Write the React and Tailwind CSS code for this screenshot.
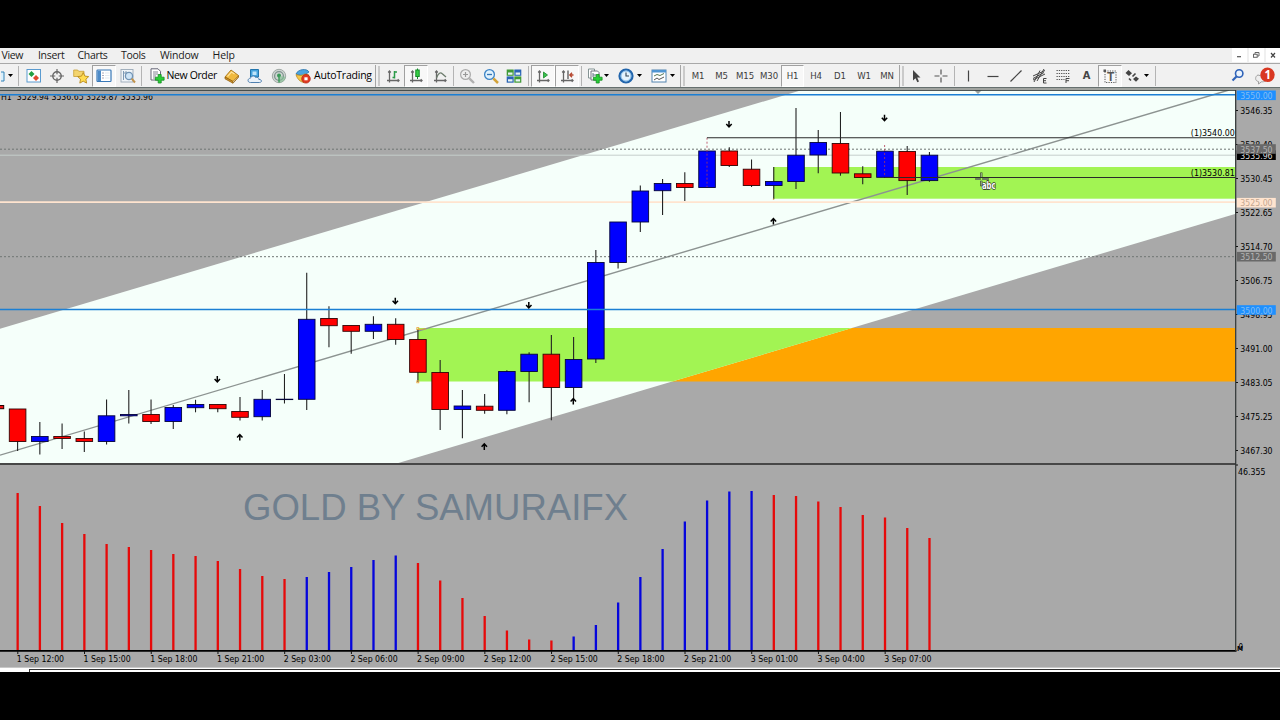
import React from "react";

const RED = "#ff0000";
const BLUE = "#0000ff";
const STEP = 22.24;
const cx = (i) => 17.8 + STEP * i;

// [color, body top, body bottom, wick top, wick bottom]
const candles = [
  ["r", 409, 441.5, 409, 451], ["b", 436.5, 441.5, 422, 454.5], ["r", 436.5, 438.5, 423.5, 449],
  ["r", 438.5, 441.5, 431.5, 452], ["b", 415.8, 441.5, 399.5, 444.5], ["b", 414.5, 415.8, 390, 423.5],
  ["r", 414.5, 421.5, 399.5, 424], ["b", 407.5, 421.5, 405, 429], ["b", 404.5, 407.7, 399.8, 412.3],
  ["r", 404.5, 408.7, 404.5, 412.3], ["r", 411.5, 417.3, 397, 420.5], ["b", 399.3, 416.7, 390, 420.5],
  ["b", 399.2, 399.6, 374, 403.5], ["b", 319.3, 399.3, 272.7, 410], ["r", 318.5, 325.7, 306.3, 347.3],
  ["r", 325.5, 331.3, 325.5, 353.7], ["b", 324.3, 331.3, 316.3, 339], ["r", 324.3, 339.5, 318.3, 344.7],
  ["r", 339.5, 372.3, 329, 382], ["r", 372.5, 409.5, 360, 430], ["b", 406, 409.5, 390, 438.3],
  ["r", 406.2, 410.3, 394, 413.7], ["b", 371.5, 410.3, 370.3, 414.3], ["b", 354.2, 371.5, 352.3, 402.3],
  ["r", 354.2, 387.5, 335, 420.3], ["b", 359.5, 387.5, 337, 400], ["b", 262.5, 359, 250, 363],
  ["b", 222, 262.5, 222, 268.5], ["b", 191, 222, 185.5, 232], ["b", 183.5, 190.7, 179, 215],
  ["r", 183.5, 187.5, 172.3, 201], ["b", 151, 187.5, 151, 187.5], ["r", 151, 165.5, 147.3, 167],
  ["r", 169.2, 185.5, 159.5, 187], ["b", 181.5, 185.5, 167, 199.3], ["b", 155.2, 181.5, 108, 189],
  ["b", 142.5, 155, 130, 173.3], ["r", 143.5, 173, 112, 175.7], ["r", 173.8, 177.5, 166.3, 184.3],
  ["b", 151.2, 177.3, 151, 178], ["r", 151.5, 180.6, 146, 195], ["b", 155.2, 180.6, 152, 181.7],
];

const bars = [
  493, 506, 523, 534, 544, 547, 550, 554, 556, 561, 569, 576, 579, 577, 572, 567, 560, 555.5,
  563, 580.5, 598, 616, 630.5, 639.5, 640.5, 636.5, 625, 602.5, 577, 549, 521.5, 500.5, 491.5, 491,
  495, 496, 501.5, 507, 515, 517.5, 528, 538,
];
const barBlue = (i) => (i >= 13 && i <= 17) || (i >= 25 && i <= 33);

const times = [
  "1 Sep 12:00", "1 Sep 15:00", "1 Sep 18:00", "1 Sep 21:00", "2 Sep 03:00", "2 Sep 06:00", "2 Sep 09:00",
  "2 Sep 12:00", "2 Sep 15:00", "2 Sep 18:00", "2 Sep 21:00", "3 Sep 01:00", "3 Sep 04:00", "3 Sep 07:00",
];

const prices = [
  ["3546.35", 110.5], ["3538.40", 144.5], ["3530.45", 178.5], ["3522.65", 212.5], ["3514.70", 246.5],
  ["3506.75", 280.5], ["3498.95", 314.5], ["3491.00", 348.5], ["3483.05", 382.5], ["3475.25", 416.5], ["3467.30", 450.5],
];

const downs = [[217.3, 379.3], [395.3, 301], [528.8, 305.3], [729, 124.3], [884.5, 118]];
const ups = [[239.8, 437.3], [484.3, 446.6], [573.3, 401.3], [773.4, 221.3]];

const FONT = "font-['DejaVu_Sans_Condensed','DejaVu_Sans',sans-serif]";

function Price({ text, y, fill = "#000" }) {
  return <text x="1240.3" y={y + 3.4} fontSize="9.5" textLength="32.3" lengthAdjust="spacingAndGlyphs" fill={fill}>{text}</text>;
}

function Tag({ text, y, bg, fill }) {
  return (
    <g>
      <rect x="1236.8" y={y - 4.8} width="39" height="9.6" fill={bg} />
      <Price text={text} y={y + 0.3} fill={fill} />
    </g>
  );
}

function Chart() {
  return (
    <svg className={`block h-[577px] w-[1280px] shrink-0 ${FONT}`} viewBox="0 90 1280 577">
      <defs>
        <clipPath id="plot"><rect x="0" y="90" width="1235" height="373.5" /></clipPath>
        <clipPath id="quote"><rect x="0" y="95.6" width="300" height="10" /></clipPath>
      </defs>
      <rect x="0" y="90" width="1280" height="577" fill="#a9a9a9" />
      <g clipPath="url(#plot)">
        <rect x="671" y="328" width="565" height="53.5" fill="#ffa500" />
        <polygon points="0,328.7 802,90 1236,90 1236,213.6 395,464 0,464" fill="#f5fffa" />
        <polygon points="417.7,328 852,328 672.3,381.5 417.7,381.5" fill="#a2f453" />
        <rect x="773.4" y="167" width="462" height="31.7" fill="#a2f453" />
        <path d="M0 455.2 1229 90" stroke="#8c9391" strokeWidth="1.4" fill="none" />
        <path d="M0 202.2H1236" stroke="#ffe4cf" strokeWidth="1.7" />
        <path d="M0 155.2H1236" stroke="#c6cecb" strokeWidth="1" />
        <path d="M0 149.2H1236M0 256.7H1236" stroke="#6f7573" strokeWidth="1" strokeDasharray="2 2" />
        <path d="M974 90h8l-4 4z" fill="#98a09d" />
      </g>
      <text x="1" y="100.300" fontSize="9.500" textLength="152" lengthAdjust="spacingAndGlyphs" clipPath="url(#quote)" xmlSpace="preserve">H1&#160; 3529.94 3536.65 3529.87 3535.96</text>

      <g>
        <rect x="-8" y="405.5" width="11.7" height="3.2" fill="#e11" stroke="#200" />
        {candles.map(([c, t, b, wt, wb], i) => (
          <g key={i}>
            <path d={`M${cx(i) - 0.9} ${wt}V${wb}`} transform="translate(.7 0)" stroke="#222" strokeWidth="1.1" />
            <rect x={cx(i) - 8.500} y={t} width="16.6" height={b - t} fill={c === "r" ? RED : BLUE} stroke={c === "r" ? "#300505" : "#05053a"} strokeWidth="0.9" />
          </g>
        ))}
      </g>
      <path d="M707 137.7V187M884.6 145V177" stroke="#b03a50" strokeWidth="0.8" strokeDasharray="2 2" />
      <path d="M707 137.700H1235M885 177.5H1235" stroke="#2a2a2a" strokeWidth="1.1" />
      <path d="M0 309.4H1236M0 94.7H1236" stroke="#1b7fd4" strokeWidth="1.5" />
      <g fill="none" stroke="#e9a23b" strokeWidth="0.8">
        <rect x="416.8" y="327.6" width="2" height="2" />
        <rect x="416.8" y="380.8" width="2" height="2" />
        <path d="M419 329.5l7-.7M773.4 198.5v1.5" />
      </g>

      <g stroke="#000" strokeWidth="1.5" fill="none">
        {downs.map(([x, y]) => <path key={x} d={`M${x} ${y - 3.3}v6M${x - 2.7} ${y - 0.2}l2.7 2.9 2.7-2.9`} />)}
        {ups.map(([x, y]) => <path key={x} d={`M${x} ${y + 3.3}v-6M${x - 2.7} ${y + 0.2}l2.7-2.9 2.7 2.9`} />)}
      </g>

      <text x="1190.800" y="136.200" fontSize="9.500" textLength="44" lengthAdjust="spacingAndGlyphs">(1)3540.00</text>
      <text x="1190.800" y="175.700" fontSize="9.500" textLength="44" lengthAdjust="spacingAndGlyphs">(1)3530.81</text>

      <g fill="none">
        <path d="M981.3 172.500v5M981.3 180.700v5.500M975.500 179h5M982.500 179h6" stroke="#303a28" strokeWidth="2.200" />
        <path d="M981.3 173v4M981.3 181.200v4.500M976 179h4M983 179h5" stroke="#d9ffc0" strokeWidth="0.700" />
      </g>
      <text x="982" y="189.3" fontSize="10" fontWeight="bold" fill="#fff" stroke="#222" strokeWidth="1.300" paintOrder="stroke" textLength="13.500" lengthAdjust="spacingAndGlyphs">abc</text>

      <path d="M0 464H1236" stroke="#474747" strokeWidth="2" />
      <path d="M0 90.4H1236" stroke="#3c4443" strokeWidth="1" />
      <text x="243" y="520.3" fontSize="37.6" fill="#6f7f8e" textLength="385" lengthAdjust="spacingAndGlyphs" className="font-['Liberation_Sans',Arial,sans-serif]">GOLD BY SAMURAIFX</text>
      {bars.map((y, i) => (
        <rect key={i} x={cx(i) - 1.3} y={y} width="2.3" height={650 - y} fill={barBlue(i) ? "#0606dc" : "#e60a0a"} />
      ))}
      <path d="M0 650.8H1236.5" stroke="#000" strokeWidth="1.8" />
      <path d="M1235.7 90V651" stroke="#2f3535" strokeWidth="1.2" />
      {times.map((t, k) => (
        <g key={t}>
          <path d={`M${cx(k * 3)} 651v3`} stroke="#111" strokeWidth="1" />
          <text x={cx(k * 3) - 1} y="662.4" fontSize="9.5" textLength="47.3" lengthAdjust="spacingAndGlyphs">{t}</text>
        </g>
      ))}
      {prices.map(([t, y]) => (
        <g key={t}>
          <path d={`M1236 ${y}h2`} stroke="#111" strokeWidth="1" />
          <Price text={t} y={y} />
        </g>
      ))}
      <Tag text="3550.00" y={95.3} bg="#1e90ff" fill="#85bdf2" />
      <Tag text="3535.96" y={155.2} bg="#000" fill="#d8d8d8" />
      <Tag text="3537.50" y={149} bg="#696969" fill="#b4b4b4" />
      <Tag text="3525.00" y={202.7} bg="#ffe4cf" fill="#c4a78f" />
      <Tag text="3512.50" y={256.7} bg="#696969" fill="#b4b4b4" />
      <Tag text="3500.00" y={310} bg="#1e90ff" fill="#85bdf2" />
      <text x="1238" y="474.6" fontSize="9.5" textLength="27.5" lengthAdjust="spacingAndGlyphs">46.355</text>
      <path d="M1236 465h2" stroke="#111" />
      <text x="1237" y="650.8" fontSize="7" fontWeight="bold" textLength="6" lengthAdjust="spacingAndGlyphs">M</text>
      <text x="1238.5" y="649.5" fontSize="8">0</text>
    </svg>
  );
}

function Ic({ children }) {
  return <svg className="h-4 w-4 shrink-0" viewBox="0 0 16 16" fill="none">{children}</svg>;
}

function Cell({ w, on, children, className = "" }) {
  return (
    <div className={`flex h-[22px] shrink-0 items-center justify-center ${w} ${className} ${on ? "border-l border-t border-[#a0a0a0] border-r border-b border-r-white border-b-white bg-[#f8f8f8]" : ""}`}>
      {children}
    </div>
  );
}

const Sep = ({ w }) => (
  <div className={`flex h-5 shrink-0 justify-center ${w}`}><div className="w-px bg-[#b4b4b4]" /></div>
);
const Handle = ({ w }) => (
  <div className={`flex h-[22px] shrink-0 items-center justify-center gap-[2px] ${w}`}>
    <div className="h-[22px] w-px bg-[#a5a5a5]" />
    <div className="h-5 w-[2px] bg-[#cacaca]" />
  </div>
);
const Caret = () => (
  <svg className="h-[3px] w-[5px] shrink-0" viewBox="0 0 5 3"><path d="M0 0h5L2.5 3z" fill="#000" /></svg>
);
const Axes = () => <path d="M4.500 3v11.500M2 12.500h12M3.200 4.500 4.500 3l1.300 1.500M12.700 11.200 14 12.500l-1.300 1.300" stroke="#666" strokeWidth="1.300" />;

function Toolbar() {
  const tf = "text-[9.5px] tracking-[-0.1px] text-[#3c3c3c] pt-px font-['DejaVu_Sans_Condensed','DejaVu_Sans',sans-serif]";
  const label = "whitespace-nowrap text-[10.5px] leading-none text-black";
  return (
    <div className="flex h-[24px] shrink-0 items-center border-t border-[#a8a8a8] bg-[#f1f1f1] font-['Open_Sans','Noto_Sans',sans-serif]">
      <Cell w="w-[14px]" className="gap-[3px]">
        <svg className="h-3 w-1" viewBox="0 0 4 12"><path d="M0 2h3v9H0" stroke="#3484b8" fill="#d9effb" /></svg>
        <Caret />
      </Cell>
      <Sep w="w-[8px]" />
      <Cell w="w-[23px]">
        <Ic><rect x="1" y="1.5" width="13.5" height="12.5" fill="#fff" stroke="#5a9bd0" /><path d="M5.500 3l3 3-3 3-3-3z" fill="#24a044" /><path d="M10 7l3 3-3 3-3-3z" fill="#e2492f" /></Ic>
      </Cell>
      <Cell w="w-[24px]">
        <Ic><circle cx="8" cy="8" r="4.2" stroke="#666" strokeWidth="1.4" /><path d="M8 1v5.3M8 9.7V15M1 8h5.3M9.7 8H15" stroke="#666" strokeWidth="1.2" /></Ic>
      </Cell>
      <Cell w="w-[23px]">
        <Ic><path d="M.7 2h4l1 1.3H11V8.5H.7z" fill="#f3d46e" stroke="#c89f35" strokeWidth=".8" /><path d="M10.2 4.6l1.7 3.5 3.8.5-2.8 2.6.7 3.9-3.4-1.9-3.4 1.9.7-3.9L4.7 8.6l3.8-.5z" fill="#ffdc50" stroke="#b98a1d" strokeWidth=".9" /></Ic>
      </Cell>
      <Cell w="w-[24px]" on>
        <Ic><rect x="1" y="2" width="14" height="11.5" rx=".8" fill="#fff" stroke="#3979b8" strokeWidth="1.2" /><path d="M1.500 2.500H5V13H1.500z" fill="#4d8bc8" /><path d="M6.500 5h1M6.500 7.500h1M6.500 10h1" stroke="#557" /><path d="M9 5h4.500M9 7.500h4.500M9 10h4.500" stroke="#d5dfea" strokeWidth=".7" /></Ic>
      </Cell>
      <Cell w="w-[24px]">
        <Ic><rect x="1" y="1.500" width="12" height="12.500" fill="#f0f4f8" stroke="#9aa9b8" strokeWidth=".9" /><path d="M3.500 3v9M3 5h8M6 3v5" stroke="#7f9ab5" strokeWidth="1" /><circle cx="9" cy="8" r="3.600" fill="#cfe5f7" stroke="#7294b5" strokeWidth="1.300" /><path d="M11.700 10.700 15 14.500" stroke="#c2934b" strokeWidth="2" /></Ic>
      </Cell>
      <Sep w="w-[3px]" />
      <Cell w="w-[77px]" className="gap-[2px] pl-[3px]">
        <Ic><path d="M2 .8h7l2.500 2.500V12H2z" fill="#fff" stroke="#667" strokeWidth="1" /><path d="M4 4h5M4 6h5M4 8h3M4 10h2" stroke="#778" strokeWidth=".9" /><path d="M9.200 6.500h3v2.700h2.900v3h-2.900V15h-3v-2.800H6.400v-3h2.800z" fill="#27cf35" stroke="#138a20" strokeWidth=".8" /></Ic>
        <span className={`${label} w-[51px] tracking-[-0.38px]`}>New Order</span>
      </Cell>
      <Cell w="w-[23px]">
        <Ic><path d="M1 9 7 2l7.500 5.500L9 13.500z" fill="#f0b93e" stroke="#a87416" strokeWidth=".9" /><path d="M1 9v1.800l8 4.400v-1.700zM9 15.200l5.500-6V7.500" fill="#d79626" stroke="#8f5f10" strokeWidth=".8" /><path d="M3.500 8.500 7.500 4l3 2" stroke="#ffe29a" strokeWidth="1.200" /></Ic>
      </Cell>
      <Cell w="w-[24px]">
        <Ic><path d="M3.500 1.500h8V9h-8z" fill="#46a3dd" stroke="#2376ae" /><path d="M5.500 3.500h4V7h-4z" fill="#bfe4fa" /><path d="M3.500 14.500c-3.500 0-3-4.300 0-4.300.5-2.500 4-3 5-.8 2-.7 3.600.6 3.300 2 3.500 0 3.500 3.100.5 3.100z" fill="#e9f1f9" stroke="#4f80b0" strokeWidth="1" /></Ic>
      </Cell>
      <Cell w="w-[24px]">
        <Ic><circle cx="8" cy="8" r="6.700" fill="#cfd6d3" stroke="#a0a9a5" /><circle cx="8" cy="8" r="4.400" stroke="#80938f" strokeWidth="1.300" /><circle cx="8" cy="7.500" r="2" fill="#3a9a58" /><path d="M8 8v6.800c3.500 0 6.500-2.500 6.500-6z" fill="#7fbd8f" opacity=".6" /><path d="M8 8v6.500" stroke="#3a9a58" strokeWidth="1.400" /></Ic>
      </Cell>
      <Cell w="w-[83px]" className="gap-[3px] pl-[3px]">
        <Ic><path d="M1 6c2-5 11-6 13-2L8 8z" fill="#4ba4df" stroke="#2a72aa" strokeWidth=".8" /><path d="M1 6.500c3 1.500 7 1 9-.5l4 1-5 7.500c-4-.5-7-4-8-8z" fill="#f4c748" stroke="#b98720" strokeWidth=".8" /><circle cx="11" cy="10.800" r="4.300" fill="#e23a22" stroke="#b02010" strokeWidth=".7" /><rect x="9.400" y="9.300" width="3.200" height="3" fill="#fff" /></Ic>
        <span className={`${label} w-[59px] tracking-[-0.22px]`}>AutoTrading</span>
      </Cell>
      <Handle w="w-[7px]" />
      <Cell w="w-[23px]"><Ic><Axes /><path d="M9.500 3v7.500M9.500 4H12M7.500 9.500h2" stroke="#2a9a48" strokeWidth="1.500" /></Ic></Cell>
      <Cell w="w-[24px]" on><Ic><Axes /><path d="M9.500.5v10.500" stroke="#178a2c" /><rect x="7.800" y="2" width="3.400" height="6.500" fill="#35cf45" stroke="#148a26" /></Ic></Cell>
      <Cell w="w-[24px]"><Ic><Axes /><path d="M4.500 10c2-5 4-6 5.500-4.500L14 9" stroke="#6c7c6c" strokeWidth="1.300" /></Ic></Cell>
      <Sep w="w-[3px]" />
      <Cell w="w-[24px]"><Ic><circle cx="6.500" cy="6.500" r="4.900" fill="#eee" stroke="#aaa" strokeWidth="1.200" /><path d="M4 6.500h5M6.500 4v5" stroke="#999" strokeWidth="1.200" /><path d="M10.300 10.300 15 15" stroke="#b0b0b0" strokeWidth="2.400" /></Ic></Cell>
      <Cell w="w-[23px]"><Ic><circle cx="6.500" cy="6.500" r="4.900" fill="#dff1fd" stroke="#3b83c6" strokeWidth="1.300" /><path d="M4 6.500h5" stroke="#3474b5" strokeWidth="1.300" /><path d="M10.300 10.300 15 15" stroke="#d2a238" strokeWidth="2.500" /></Ic></Cell>
      <Cell w="w-[24px]">
        <Ic><rect x=".7" y="1.500" width="7" height="6.300" fill="#3f9a35" /><rect x="8.300" y="1.500" width="7" height="6.300" fill="#2964b4" /><rect x=".7" y="8.400" width="7" height="6.300" fill="#2964b4" /><rect x="8.300" y="8.400" width="7" height="6.300" fill="#3f9a35" /><path d="M2 4.500h4.500v2.200H2zM9.600 4.500h4.500v2.200H9.600zM2 11.300h4.500v2.200H2zM9.600 11.300h4.500v2.200H9.600z" fill="#e8f4f4" /></Ic>
      </Cell>
      <Sep w="w-[5px]" />
      <Cell w="w-[24px]" on><Ic><Axes /><path d="M8.500 4l4 3-4 3z" fill="#38c04c" stroke="#188a2c" strokeWidth=".8" /></Ic></Cell>
      <Cell w="w-[24px]" on><Ic><Axes /><path d="M9 2.500v8.500" stroke="#555" strokeWidth="1.300" /><path d="M14.500 7H10.500M13 4.700 10.800 7 13 9.300" stroke="#b5452d" strokeWidth="1.300" /></Ic></Cell>
      <Sep w="w-[4px]" />
      <Cell w="w-[30px]" className="gap-px">
        <Ic><path d="M1.500 1h6v9h-6z" fill="#fff" stroke="#788" strokeWidth=".9" /><path d="M4 3h6.500l1.500 1.500V12H4z" fill="#fff" stroke="#667" strokeWidth=".9" /><path d="M6 5v4M6 7h3" stroke="#678" /><path d="M9.200 6.500h3v2.700h2.900v3h-2.900V15h-3v-2.800H6.400v-3h2.800z" fill="#27cf35" stroke="#138a20" strokeWidth=".8" /></Ic>
        <Caret />
      </Cell>
      <Cell w="w-[33px]" className="gap-[3px]">
        <Ic><circle cx="8" cy="8" r="6.500" fill="#e5f3fd" stroke="#2265ac" strokeWidth="2.200" /><circle cx="8" cy="8" r="5" stroke="#69aae0" strokeWidth=".8" /><path d="M8 4.500V8h3" stroke="#345" strokeWidth="1.100" /></Ic>
        <Caret />
      </Cell>
      <Cell w="w-[33px]" className="gap-[3px]">
        <Ic><rect x="1" y="2" width="14" height="12" fill="#fff" stroke="#5384b0" /><path d="M1 2h14v2.500H1z" fill="#4f95d2" /><path d="M3 8l3-1.500 3 1 4-2" stroke="#575" /><path d="M3 12l3-2 2 1.500 5-2.500" stroke="#555" /></Ic>
        <Caret />
      </Cell>
      <Handle w="w-[7px]" />
      <Cell w="w-[24px]" className={tf}>M1</Cell>
      <Cell w="w-[23px]" className={tf}>M5</Cell>
      <Cell w="w-[24px]" className={tf}>M15</Cell>
      <Cell w="w-[24px]" className={tf}>M30</Cell>
      <Cell w="w-[23px]" className={tf} on>H1</Cell>
      <Cell w="w-[24px]" className={tf}>H4</Cell>
      <Cell w="w-[24px]" className={tf}>D1</Cell>
      <Cell w="w-[24px]" className={tf}>W1</Cell>
      <Cell w="w-[22px]" className={tf}>MN</Cell>
      <Handle w="w-[6px]" />
      <Cell w="w-[24px]"><Ic><path d="M5 2v10.500l2.500-2.300 1.800 4 1.700-.8-1.800-3.800h3.300z" fill="#444" /></Ic></Cell>
      <Cell w="w-[25px]"><Ic><path d="M8 1.500v5M8 9.500v5M1.500 8h5M9.500 8h5" stroke="#555" strokeWidth="1.200" /></Ic></Cell>
      <Sep w="w-[3px]" />
      <Cell w="w-[25px]"><Ic><path d="M7.500 2.500v11" stroke="#444" strokeWidth="1.200" /></Ic></Cell>
      <Cell w="w-[23px]"><Ic><path d="M2.500 8.500h11" stroke="#444" strokeWidth="1.200" /></Ic></Cell>
      <Cell w="w-[24px]"><Ic><path d="M2.500 13.500l11-11" stroke="#444" strokeWidth="1.200" /></Ic></Cell>
      <Cell w="w-[23px]">
        <Ic><path d="M1 8 13 2.500M1 12 13 6M2 14 8 2.500M5 13l7-12M1 10.500l11-6" stroke="#444" strokeWidth="1" /><path d="M14.500 10.500h-3v4.500h3M11.500 12.700H14" stroke="#444" /></Ic>
      </Cell>
      <Cell w="w-[24px]">
        <Ic><path d="M1.500 2.500h13M1.500 5.500h13M1.500 8.500h13M1.500 11.500h8" stroke="#555" strokeDasharray="1.300 1" /><path d="M14.500 10.500h-3.500v4.500M11 12.700h3" stroke="#444" /></Ic>
      </Cell>
      <Cell w="w-[23px]" className="pt-px font-['DejaVu_Sans_Condensed','DejaVu_Sans',sans-serif] text-[11px] font-bold text-[#444]">A</Cell>
      <Cell w="w-[24px]" on>
        <svg className="h-4 w-4 font-['Liberation_Sans',Arial,sans-serif]" viewBox="0 0 16 16"><rect x="3" y="3" width="11" height="11.500" fill="none" stroke="#555" strokeDasharray="1.200 1.200" /><path d="M1.500 1.500h2.500v2.500H1.500z" fill="#555" /><text x="5" y="13" fontSize="12" fontWeight="bold" fill="#555">T</text></svg>
      </Cell>
      <Cell w="w-[31px]" className="gap-[4px] pr-[2px]">
        <Ic><path d="M4.500 2 8 5.300 5 8 1.500 5z" fill="#444" /><path d="M12 8.500l3 2.300-3 3-3-2.800z" fill="#444" /><path d="M5 10.500l2 2M8.500 8.500l3-3" stroke="#444" strokeWidth="1.600" /></Ic>
        <Caret />
      </Cell>
      <Sep w="w-[4px]" />
      <div className="flex-1" />
      <Cell w="w-[22px]"><Ic><circle cx="9.200" cy="5.500" r="3.700" fill="#eaf3fd" stroke="#2e62b8" strokeWidth="1.600" /><path d="M6.500 8.500 2.500 12.500" stroke="#2e62b8" strokeWidth="2.200" /></Ic></Cell>
      <div className="flex w-[31px] shrink-0 justify-end pr-[4px]">
        <svg className="h-[20px] w-[22px] font-['Open_Sans',sans-serif]" viewBox="0 0 22 20"><path d="M4 9c-3 1-3.500 6 .5 6.500L4.500 18l3-2.200c3 .2 6-1 6-4z" fill="#eee" stroke="#a0a0a0" /><circle cx="13.500" cy="8.800" r="7.200" fill="#d93822" /><text x="10.500" y="13" fontSize="11.500" fontWeight="bold" fill="#fff">1</text></svg>
      </div>
    </div>
  );
}

function MenuBar() {
  const item = "shrink-0 whitespace-nowrap";
  return (
    <div className="flex h-[15px] shrink-0 items-center bg-[#f0f0f0] pb-px font-['Open_Sans','Noto_Sans',sans-serif] text-[10.5px] leading-none tracking-[-0.32px] text-[#1b1b1b]">
      <div className={`${item} w-[38px] pl-[1.5px]`}>View</div>
      <div className={`${item} w-[39.5px]`}>Insert</div>
      <div className={`${item} w-[43.5px]`}>Charts</div>
      <div className={`${item} w-[39px]`}>Tools</div>
      <div className={`${item} w-[52.5px] tracking-[-0.2px]`}>Window</div>
      <div className={`${item} tracking-[-0.1px]`}>Help</div>
      <div className="ml-auto flex h-[14px] self-start gap-[2px]">
        <div className="w-[15px] bg-white"><svg className="h-[14px] w-[15px]" viewBox="0 0 15 14"><path d="M5 8.700h4" stroke="#555" strokeWidth="1.200" /></svg></div>
        <div className="w-[15px] bg-white"><svg className="h-[14px] w-[15px]" viewBox="0 0 15 14" fill="none"><path d="M6 6V4.500h4v3.500H8.500" stroke="#666" /><rect x="4.500" y="6.300" width="3.700" height="3" stroke="#666" /></svg></div>
        <div className="w-[14px] bg-white"><svg className="h-[14px] w-[14px]" viewBox="0 0 14 14"><path d="M5 5l4 4.500M9 5 5 9.500" stroke="#444" strokeWidth="1.200" /></svg></div>
      </div>
    </div>
  );
}

export default function App() {
  return (
    <div className="flex h-[720px] w-[1280px] flex-col overflow-hidden bg-black pt-12">
      <MenuBar />
      <Toolbar />
      <div className="h-px shrink-0 bg-[#66706f]" />
      <div className="h-[2px] shrink-0 bg-[#a0a39f]" />
      <Chart />
      <div className="h-px shrink-0 bg-[#c8c8c8]" />
      <div className="h-px shrink-0 bg-white" />
      <div className="flex h-px shrink-0 bg-white pl-[29px]"><div className="flex-1 bg-[#333]" /></div>
      <div className="flex h-[2px] shrink-0 bg-white pl-[29px]"><div className="w-px bg-[#333]" /></div>
    </div>
  );
}
